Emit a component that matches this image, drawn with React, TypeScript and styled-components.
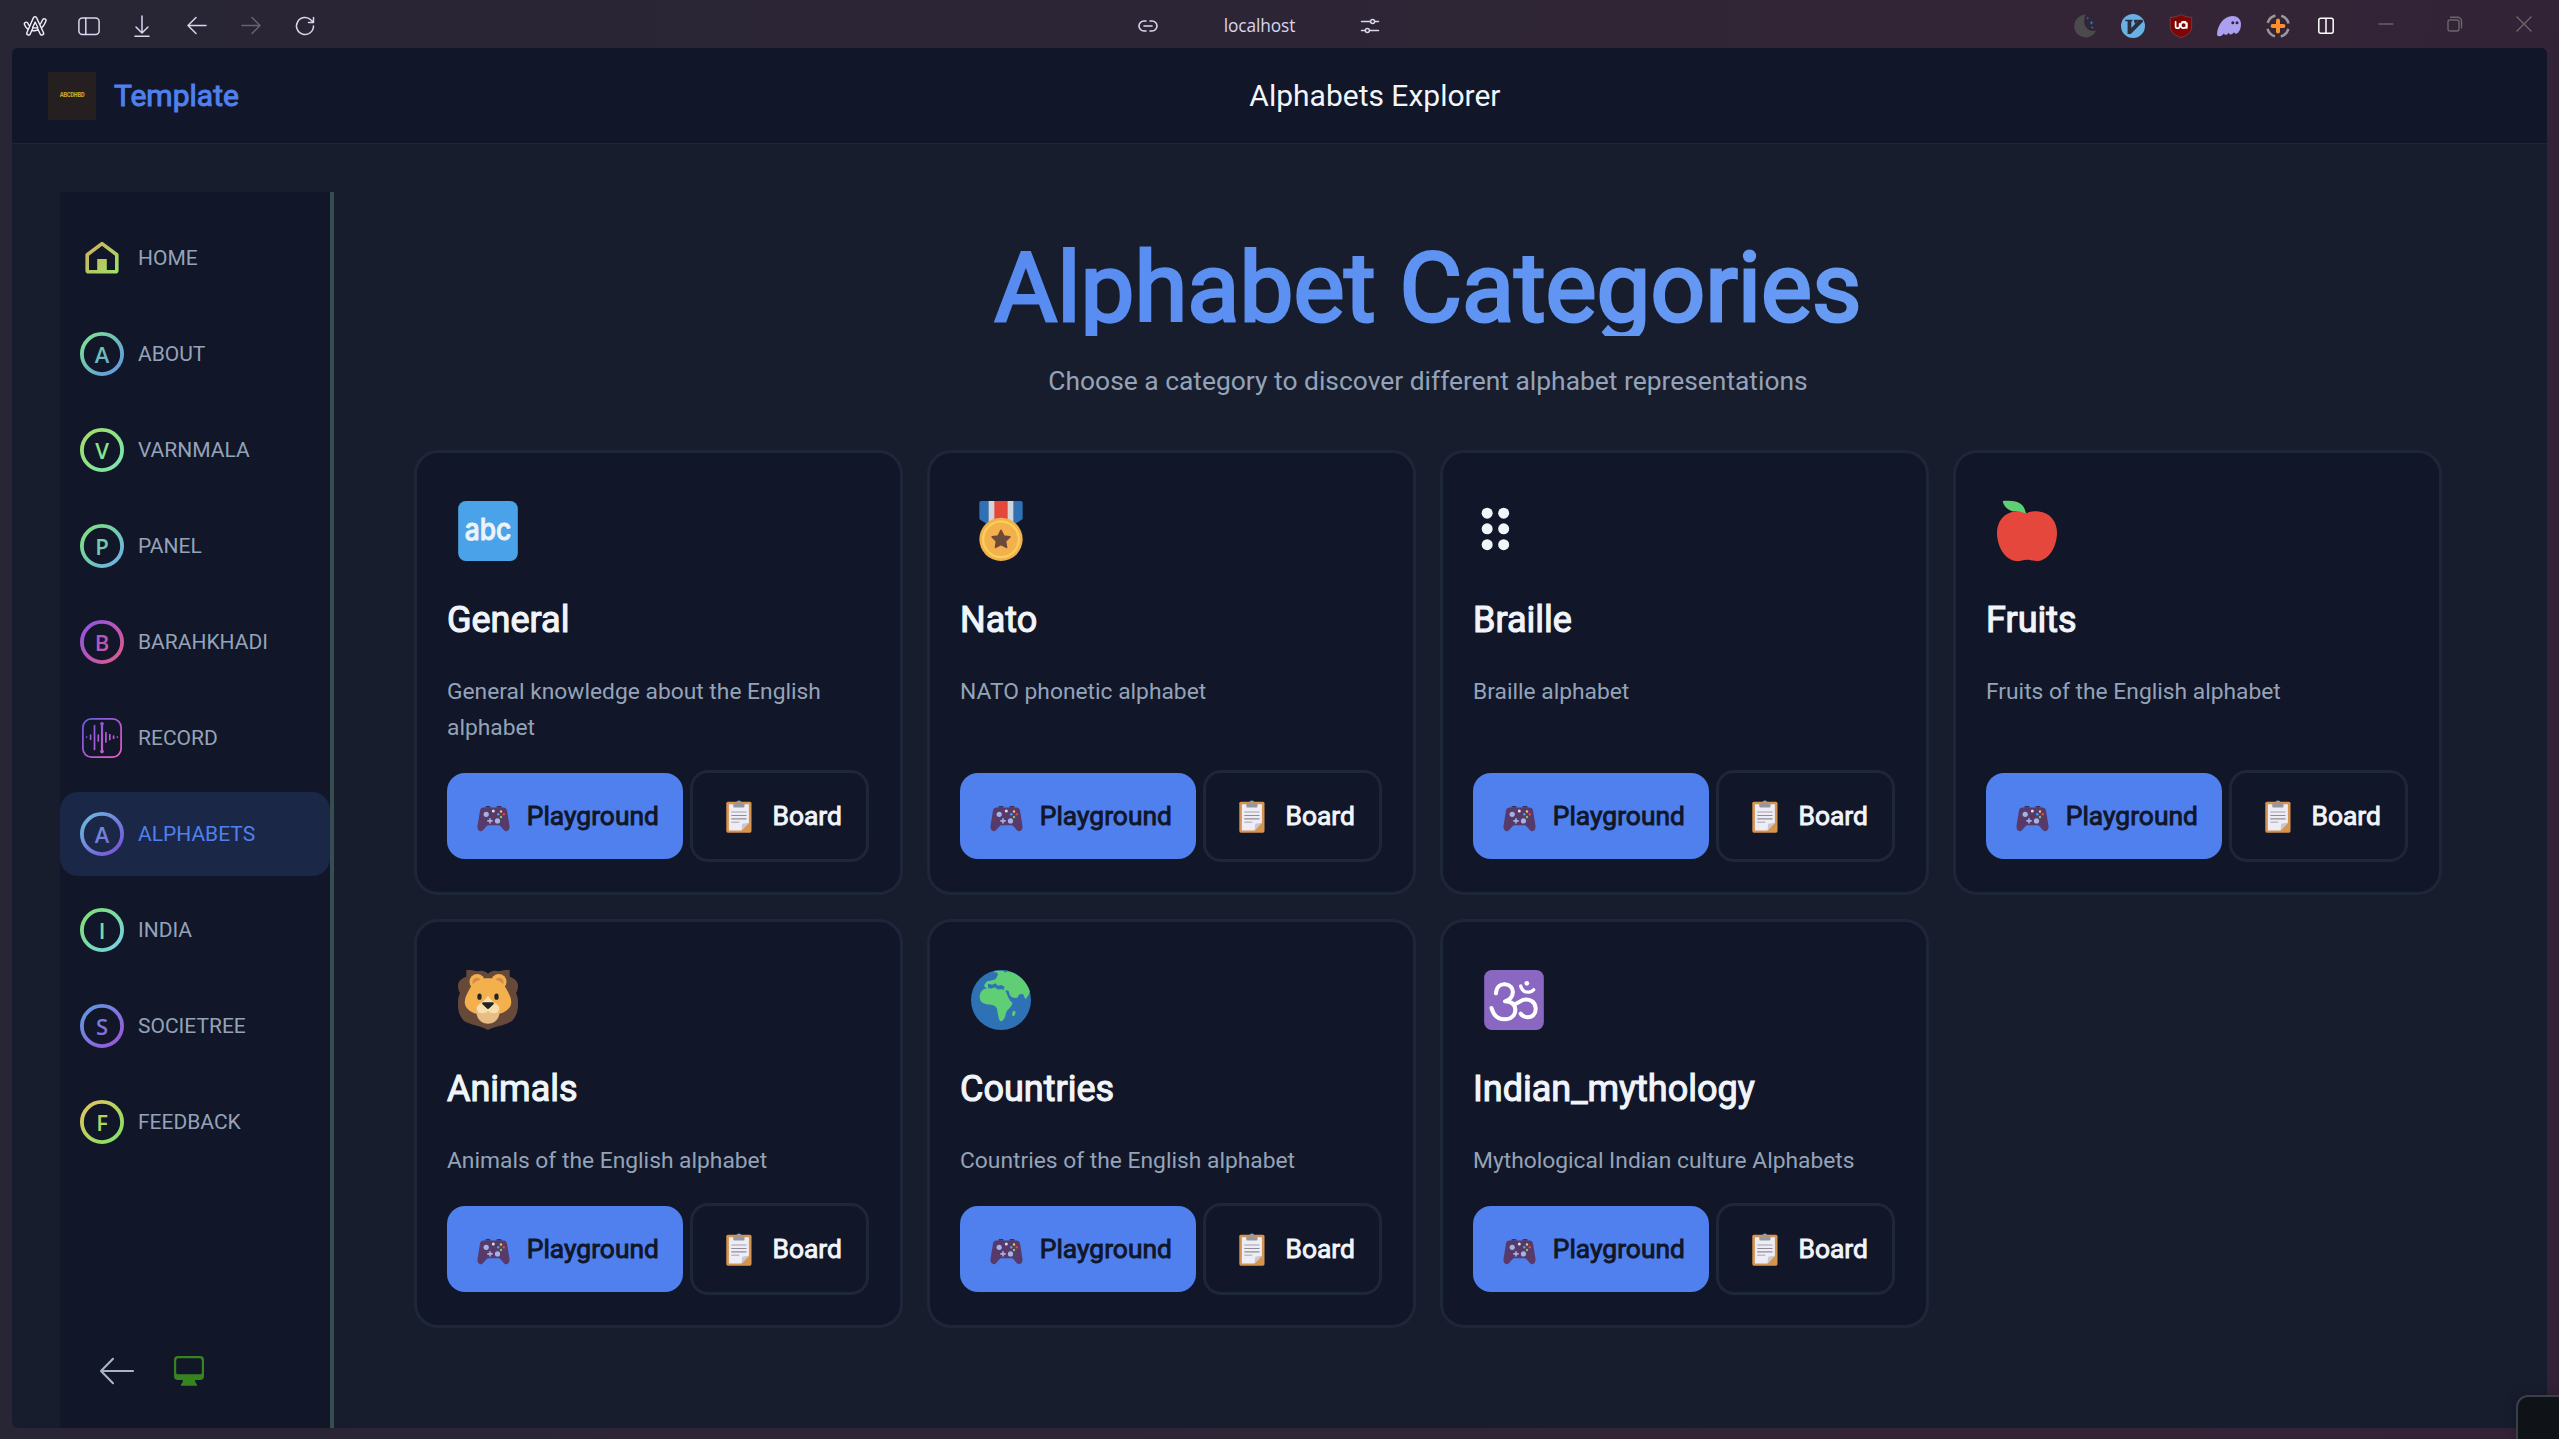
import React from "react";
import styled, { createGlobalStyle, css } from "styled-components";

const font = `Roboto, "Noto Sans", "Liberation Sans", sans-serif`;

const color = {
  page: "#181d2e",
  surface: "#111628",
  line: "#1e2739",
  text: "#f1f5f9",
  muted: "#94a3b8",
  primary: "#4f80ee",
  chrome: "#d9d6ee",
};

const GlobalStyle = createGlobalStyle`
  * { box-sizing: border-box; }
  html, body { margin: 0; padding: 0; height: 100%; overflow: hidden; }
  body { font-family: ${font}; color: ${color.text}; }
  h1, h2, p { margin: 0; font-weight: 400; }
  svg { display: block; flex: none; overflow: visible; }
  button { font: inherit; margin: 0; cursor: pointer; }
`;

/* ---------- window frame ---------- */

const Window = styled.div`
  position: relative;
  display: flex;
  flex-direction: column;
  width: 2559px;
  height: 1439px;
  padding: 0 12px 11px;
  overflow: hidden;
  background: linear-gradient(97deg, #282535 0%, #2d2535 48%, #342536 78%, #332236 100%);
`;

const TitleBar = styled.div`
  display: flex;
  align-items: center;
  flex: none;
  height: 48px;
  padding-top: 3px;
`;

const ToolGroup = styled.div<{ $left?: number; $gap?: number }>`
  display: flex;
  align-items: center;
  gap: ${(p) => p.$gap ?? 0}px;
  margin-left: ${(p) => p.$left ?? 0}px;
`;

const WindowControls = styled(ToolGroup)`
  padding-bottom: 4px;
`;

const Address = styled.div`
  width: 203px;
  text-align: center;
  font: 400 17.3px/24px "Open Sans", "Noto Sans", sans-serif;
  letter-spacing: -0.1px;
  color: ${color.chrome};
`;

const Page = styled.div`
  display: flex;
  flex-direction: column;
  flex: 1;
  min-height: 0;
  overflow: hidden;
  border-radius: 6px;
  background: ${color.page};
`;

const CornerWidget = styled.div`
  position: absolute;
  right: -12px;
  bottom: -12px;
  width: 55px;
  height: 56px;
  border: 2px solid #3c3f47;
  border-radius: 12px;
  background: #0f1317;
  box-shadow: 0 0 12px rgba(0, 0, 0, 0.25);
`;

/* ---------- header ---------- */

const Header = styled.header`
  display: flex;
  align-items: center;
  flex: none;
  height: 96px;
  padding: 0 36px;
  border-bottom: 1px solid ${color.line};
  background: ${color.surface};
`;

const Brand = styled.div`
  display: flex;
  align-items: center;
  gap: 18px;
`;

const Logo = styled.div`
  display: flex;
  align-items: center;
  justify-content: center;
  width: 48px;
  height: 48px;
  background: #25201f;
  color: #c9a62e;
  font: 700 6.5px/8px "Liberation Mono", monospace;
  letter-spacing: -0.4px;
`;

const BrandName = styled.span`
  font-size: 30px;
  line-height: 45px;
  color: ${color.primary};
  -webkit-text-stroke: 1px ${color.primary};
`;

const PageTitle = styled.span`
  flex: 1;
  font-size: 30px;
  line-height: 45px;
  text-align: center;
`;

const Body = styled.div`
  display: flex;
  flex: 1;
  min-height: 0;
  padding: 48px 105px 0 48px;
`;

/* ---------- sidebar ---------- */

const Sidebar = styled.nav`
  display: flex;
  flex-direction: column;
  flex: none;
  width: 274px;
  padding-top: 24px;
  border-right: 4px solid #374e50;
  background: ${color.surface};
`;

const NavList = styled.div`
  display: flex;
  flex-direction: column;
  gap: 12px;
`;

const NavItem = styled.a<{ $active?: boolean }>`
  display: flex;
  align-items: center;
  gap: 14px;
  height: 84px;
  padding-left: 20px;
  border-radius: 18px;
  font-size: 21px;
  line-height: 32px;
  color: ${(p) => (p.$active ? color.primary : color.muted)};
  background: ${(p) => (p.$active ? "#1b2746" : "transparent")};
`;

const SidebarTools = styled.div`
  display: flex;
  align-items: center;
  gap: 38px;
  margin-top: auto;
  padding: 0 0 42px 39px;
`;

/* ---------- content ---------- */

const Main = styled.main`
  flex: 1;
  min-width: 0;
  padding: 48px 0 0 80px;
`;

const Heading = styled.h1`
  font-size: 96px;
  line-height: 96px;
  text-align: center;
  background: linear-gradient(100deg, #4c80ef 0%, #72a6f5 100%);
  -webkit-background-clip: text;
  background-clip: text;
  color: transparent;
  -webkit-text-stroke: 3px transparent;
`;

const Lead = styled.p`
  margin: 24px 0 48px;
  font-size: 26.4px;
  line-height: 42px;
  text-align: center;
  color: ${color.muted};
`;

const Grid = styled.div`
  display: grid;
  grid-template-columns: repeat(4, 1fr);
  gap: 24px;
`;

const Card = styled.article`
  display: flex;
  flex-direction: column;
  padding: 30px;
  border: 3px solid ${color.line};
  border-radius: 24px;
  background: ${color.surface};
`;

const CardIcon = styled.div`
  height: 109.5px;
  padding: 18px 0 0 11px;
`;

const CardTitle = styled.h2`
  font-size: 36px;
  line-height: 54px;
  -webkit-text-stroke: 1.1px ${color.text};
`;

const CardText = styled.p`
  margin: 27px 0 24px;
  font-size: 22.8px;
  line-height: 36.48px;
  color: ${color.muted};
`;

const Actions = styled.div`
  display: flex;
  align-items: center;
  gap: 6.8px;
  margin-top: auto;
`;

const Button = styled.button<{ $primary?: boolean }>`
  display: flex;
  align-items: center;
  padding: 0 24px;
  border-radius: 18px;
  font-size: 26.4px;
  line-height: 40px;
  white-space: nowrap;
  ${(p) =>
    p.$primary
      ? css`
          height: 86px;
          border: 0;
          background: ${color.primary};
          color: ${color.surface};
          -webkit-text-stroke: 0.9px ${color.surface};
        `
      : css`
          height: 92px;
          border: 3px solid ${color.line};
          background: ${color.surface};
          color: ${color.text};
          -webkit-text-stroke: 0.9px ${color.text};
        `}
`;

const ButtonIcon = styled.span<{ $inset: number; $drop?: number }>`
  width: 55.8px;
  padding-left: ${(p) => p.$inset}px;
  padding-top: ${(p) => p.$drop ?? 0}px;
`;

/* ---------- title bar icons ---------- */

const line = {
  fill: "none",
  stroke: color.chrome,
  strokeWidth: 1.5,
  strokeLinecap: "round" as const,
  strokeLinejoin: "round" as const,
};

const ArcIcon = () => (
  <svg width="26" height="26" viewBox="0 0 26 26" fill="none" strokeLinecap="round" strokeLinejoin="round">
    <path d="M3.200 11c2.600 6.400 13.500 8 18-3.400" stroke="#f0eff8" strokeWidth="5" />
    <path d="M3.200 11c2.600 6.400 13.500 8 18-3.400" stroke="#2a2636" strokeWidth="2.200" />
    <path d="M5.600 20.200 12 5.600l6.800 14.600" stroke="#f0eff8" strokeWidth="5" />
    <path d="M5.600 20.200 12 5.600l6.800 14.600" stroke="#2a2636" strokeWidth="2.200" />
    <path d="M9.600 14.600c1.800.6 3.500.5 5.200-.1L12.200 9.200z" fill="#2a2636" stroke="#f0eff8" strokeWidth="1.300" />
  </svg>
);

const PanelIcon = () => (
  <svg width="22" height="20" viewBox="0 0 22 20" {...line}>
    <rect x="0.9" y="1.900" width="20.200" height="16.600" rx="3.500" />
    <path d="M7.800 1.900v16.600" />
  </svg>
);
const DownloadIcon = () => (
  <svg width="16" height="22" viewBox="0 0 16 22" {...line}>
    <path d="M8 1v17M2 12 8 18l6-6M1 21.200h14" />
  </svg>
);
const BackIcon = ({ dim }: { dim?: boolean }) => (
  <svg width="20" height="20" viewBox="0 0 20 20" {...line} opacity={dim ? 0.35 : 1}>
    <path d={dim ? "M1 9.500h18M11 1.500l8 8-8 8" : "M19 9.500H1M9 1.500l-8 8 8 8"} />
  </svg>
);
const ReloadIcon = () => (
  <svg width="20" height="20" viewBox="0 0 20 20" {...line}>
    <path d="M18.500 10a8.500 8.500 0 1 1-2.500-6l2 2M18.500 1.500V6.500h-5" />
  </svg>
);
const LinkIcon = () => (
  <svg width="20" height="14" viewBox="0 0 20 14" {...line} strokeWidth={1.6}>
    <path d="M8 2H6a5 5 0 0 0 0 10h2M12 2h2a5 5 0 0 1 0 10h-2M6 7h8" />
  </svg>
);
const TuneIcon = () => (
  <svg width="18" height="16" viewBox="0 0 18 16" {...line} strokeWidth={1.5}>
    <path d="M.5 3.500h8.800M14 3.500h3.500M.5 12.500H4M9 12.500h8.500" />
    <circle cx="11.600" cy="3.500" r="2" />
    <circle cx="6.400" cy="12.500" r="2" />
  </svg>
);

const MoonIcon = () => (
  <svg width="24" height="24" viewBox="0 0 24 24">
    <path d="M12.500.5A11.500 11.500 0 1 0 23.200 16.500C15 19.500 8 10.500 12.500.5z" fill="#4b4b4d" />
    <path
      d="M18.500 6.500l.6 1.700 1.700.6-1.700.6-.6 1.700-.6-1.700-1.700-.6 1.700-.6zM14.700 2.800l.4 1 1 .4-1 .4-.4 1-.4-1-1-.4 1-.4zM19.200 12.200l.4.900 1 .4-1 .4-.4.900-.4-.9-1-.4 1-.4z"
      fill="#1180d8"
    />
  </svg>
);
const VimIcon = () => (
  <svg width="24" height="24" viewBox="0 0 24 24">
    <circle cx="12" cy="12" r="12" fill="#68b1e2" />
    <path d="M4.300 5.800h7.400v1.400h-1.400v6.800L16.400 7.600V5.800h5l.8 1.700L9.800 20H6.600V7.200H4.300z" fill="#2c2c3c" />
    <path d="M11.700 5.800h4.700v1.800l-2.600 3V8.200h-2z" fill="#2c2c3c" />
    <path d="M12.300 5.200v5.800" stroke="#68b1e2" strokeWidth="1.600" />
  </svg>
);
const ShieldIcon = () => (
  <svg width="24" height="24" viewBox="0 0 24 24">
    <path
      d="M12 .5C9 2.300 5.500 3.200 1.300 3.300V13c0 5 4.500 8.500 10.700 10.600C18.200 21.500 22.700 18 22.700 13V3.300C18.500 3.200 15 2.300 12 .5z"
      fill="#7f0406"
      stroke="#9d5a5e"
      strokeWidth=".5"
    />
    <path
      d="M6.600 7.800v4.700c0 1.200.8 1.700 2 1.700s2-.5 2-1.700V9.800M16.400 7.800h-3.100M17.800 9v4.900"
      fill="none"
      stroke="#fff"
      strokeWidth="1.700"
      strokeLinecap="round"
    />
    <circle cx="14.600" cy="11.200" r="2.900" fill="none" stroke="#fff" strokeWidth="1.700" />
  </svg>
);
const GhostIcon = () => (
  <svg width="26" height="24" viewBox="0 0 26 24">
    <path
      d="M1 20.500C1 12 7.500 2 16.500 2c5 0 8.500 3.300 8.500 8 0 5.200-2.500 9.800-5.200 9.800-1.300 0-1.500-1-1.700-1.700-1 1.700-2.300 2.500-3.600 2.300-1.300-.2-1.600-1.300-1.500-2-1.300 1.700-2.600 2.600-3.900 2.300-1-.3-1.100-1-1-1.700C6.500 21.600 5 22.300 3.200 22.200 1.800 22.200 1 21.600 1 20.500z"
      fill="#ab9ff2"
    />
    <circle cx="16.800" cy="8.700" r="1.500" fill="#2f2537" />
    <circle cx="21" cy="8.700" r="1.500" fill="#2f2537" />
  </svg>
);
const TargetIcon = () => (
  <svg width="24" height="24" viewBox="0 0 24 24" fill="none">
    <circle
      cx="12"
      cy="12"
      r="10.800"
      stroke="#9a9a9c"
      strokeWidth="2.500"
      strokeDasharray="11 5.960"
      strokeDashoffset="-3"
    />
    <path d="M12 6.600v10.800M6.600 12h10.800" stroke="#ff8f2b" strokeWidth="4" strokeLinecap="round" />
  </svg>
);
const SplitIcon = () => (
  <svg width="16" height="17" viewBox="0 0 16 17" fill="none" stroke="#fff" strokeWidth="1.500">
    <rect x=".8" y="1.200" width="14.400" height="15" rx="2" />
    <path d="M8 1.200v15" />
  </svg>
);
const WindowIcon = ({ d }: { d: string }) => (
  <svg width="16" height="16" viewBox="0 0 16 16" fill="none" stroke="#6d6569" strokeWidth="1.400">
    <path d={d} />
  </svg>
);

/* ---------- sidebar icons ---------- */

type Stops = [string, string];

const Gradient = ({ id, stops }: { id: string; stops: Stops }) => (
  <linearGradient id={id} x1="4" y1="4" x2="40" y2="40" gradientUnits="userSpaceOnUse">
    <stop offset="0" stopColor={stops[0]} />
    <stop offset="1" stopColor={stops[1]} />
  </linearGradient>
);

const LetterIcon = ({ id, letter, stops }: { id: string; letter: string; stops: Stops }) => (
  <svg width="44" height="44" viewBox="0 0 44 44">
    <defs>
      <Gradient id={id} stops={stops} />
    </defs>
    <circle cx="22" cy="22" r="20.100" fill="none" stroke={`url(#${id})`} strokeWidth="3.800" />
    <text
      x="22"
      y="30.500"
      textAnchor="middle"
      fill={`url(#${id})`}
      fontFamily="'Open Sans', 'Noto Sans', sans-serif"
      fontWeight="600"
      fontSize="22"
    >
      {letter}
    </text>
  </svg>
);

const HomeIcon = () => (
  <svg width="44" height="44" viewBox="0 0 44 44">
    <defs>
      <Gradient id="home" stops={["#d8a85c", "#98e666"]} />
    </defs>
    <path
      d="M7.200 19.200 22 8l14.800 11.200v15.400q0 1.600-1.600 1.600H8.800q-1.600 0-1.600-1.600z"
      transform="translate(0 -0.400)"
      fill="none"
      stroke="url(#home)"
      strokeWidth="3.600"
      strokeLinejoin="round"
    />
    <path d="M17.200 23h9.600v13h-9.600z" fill="url(#home)" />
  </svg>
);

const RecordIcon = () => (
  <svg width="44" height="44" viewBox="0 0 44 44" fill="none" stroke="url(#rec)" strokeLinecap="round">
    <defs>
      <Gradient id="rec" stops={["#6c5ae8", "#ec5cc4"]} />
    </defs>
    <rect x="2.900" y="2.900" width="38.200" height="38.200" rx="8.500" strokeWidth="1.700" />
    <path
      d="M6.600 21v.01M10.600 19v4.200M14.500 9.500v24M18.300 19v6M25.900 16.500v9.500M29.800 18.500v5M33.600 20.200v2M37.400 21v.01"
      strokeWidth="1.700"
    />
    <path d="M22.010 8v28" strokeWidth="2.200" />
    <circle cx="22" cy="7.800" r="1.800" fill="url(#rec)" stroke="none" />
    <circle cx="22" cy="35.600" r="1.800" fill="url(#rec)" stroke="none" />
  </svg>
);

const CollapseIcon = () => (
  <svg width="37" height="30" viewBox="0 0 37 30" fill="none" stroke="#a9b4c6" strokeWidth="2.100" strokeLinecap="round" strokeLinejoin="round">
    <path d="M34 15H2.500M14 2.800 2 15l12 12.200" />
  </svg>
);

const DisplayIcon = () => (
  <svg width="30" height="30" viewBox="0 0 30 30" fill="#37831f">
    <path
      fillRule="evenodd"
      d="M4 0h22a4 4 0 0 1 4 4v16a4 4 0 0 1-4 4h-5c.2 1.900.8 3.100 1.800 4.200.7.800.4 1.500-.6 1.500H7.800c-1 0-1.300-.7-.6-1.500 1-1.100 1.600-2.300 1.800-4.200H4a4 4 0 0 1-4-4V4a4 4 0 0 1 4-4zm.5 2.200A2.300 2.300 0 0 0 2.200 4.500v12.300c0 .9.600 1.500 1.500 1.500h22.600c.9 0 1.500-.6 1.500-1.500V4.500a2.300 2.300 0 0 0-2.300-2.300z"
    />
  </svg>
);

/* ---------- emoji artwork ---------- */

const Emoji = ({ children }: { children: React.ReactNode }) => (
  <svg width="60" height="60" viewBox="0 0 36 36">
    {children}
  </svg>
);

const AbcEmoji = () => (
  <Emoji>
    <rect x=".1" width="35.800" height="36" rx="4.600" fill="#4aa2e8" />
    <text
      x="4"
      y="23.600"
      fill="#eef3f8"
      fontFamily="Inter, sans-serif"
      fontWeight="500"
      fontSize="18"
      textLength="28"
      lengthAdjust="spacingAndGlyphs"
      stroke="#eef3f8"
      strokeWidth=".55"
      strokeLinejoin="round"
    >
      abc
    </text>
  </Emoji>
);

const MedalEmoji = () => (
  <Emoji>
    <path d="M6 .0h24a1 1 0 0 1 1 1v9.400q0 .5-.5.800L18 19 5.500 11.200q-.5-.3-.5-.8V1a1 1 0 0 1 1-1z" fill="#2f71b5" />
    <path d="M10.600 0h14.800v14H10.600z" fill="#d3d5d8" />
    <path d="M14 0h8v14h-8z" fill="#e5473c" />
    <circle cx="18" cy="23" r="13" fill="#f3b04c" />
    <circle cx="18" cy="23" r="10.700" fill="none" stroke="#f8d35a" strokeWidth="1.300" />
    <path
      d="M18 17.600l1.700 3.400 3.600.5-2.600 2.600.6 3.700-3.300-1.700-3.300 1.700.6-3.700-2.600-2.600 3.600-.5z"
      fill="#6b4a3a"
      stroke="#6b4a3a"
      strokeWidth="1"
      strokeLinejoin="round"
    />
  </Emoji>
);

const BrailleIcon = () => (
  <Emoji>
    {[7.3, 16.7, 26.2].map((y) => (
      <React.Fragment key={y}>
        <circle cx="1.900" cy={y} r="3.300" fill={color.text} />
        <circle cx="11.800" cy={y} r="3.300" fill={color.text} />
      </React.Fragment>
    ))}
  </Emoji>
);

const AppleEmoji = () => (
  <Emoji>
    <path
      d="M18 7.300C20 6.300 22.500 6 25 6.300 32 7 36 12.500 36 19c0 8.500-5 16.500-11.500 17-2.500.1-4.300-.8-6.500-.8s-4 .9-6.500.8C5 35.500 0 27.500 0 19 0 12.500 4 7 11 6.300c2.500-.3 5 0 7 1z"
      fill="#e5473c"
    />
    <path d="M3.400 0c5.600-.5 9.600.2 11.800 2.600 1.300 1.500 1.900 3.200 2.100 5C14 6.200 12 5.900 9.600 6.300 6 5.200 4 3 3.400 0z" fill="#5fce75" />
  </Emoji>
);

const LionEmoji = () => (
  <Emoji>
    <path
      d="M5 0c3 0 4.500.3 6.500.8C14 .2 16 .3 18 2.200 20 .3 22 .2 24.500.8 26.500.3 28 0 31 0v4c3.500 1.200 5 3 5 5.500 0 1.500-.3 3-1.200 4.500.9 1.500 1.200 3 1.200 6 0 4-.5 7-3.500 10.500C29 33 22.500 33.500 18 36 13.500 33.500 7 33 3.500 30.500.5 27 0 24 0 20c0-3 .3-4.500 1.200-6C.3 12.500 0 11 0 9.500 0 7 1.500 5.200 5 4z"
      fill="#67493a"
    />
    <circle cx="11.500" cy="7" r="4.600" fill="#f3b04c" />
    <circle cx="24.500" cy="7" r="4.600" fill="#f3b04c" />
    <circle cx="11.300" cy="7.300" r="2.600" fill="#d48a4a" />
    <circle cx="24.700" cy="7.300" r="2.600" fill="#d48a4a" />
    <path
      d="M18 5c4 0 8.500 1.500 10.800 6 1.800 3.500 3.700 6.200 3 9.500-.8 3.500-5 5.500-8 6H12.200c-3-.5-7.200-2.500-8-6-.7-3.300 1.200-6 3-9.500C9.500 6.500 14 5 18 5z"
      fill="#f3b04c"
    />
    <path d="M10.500 22h15l-.8 5c-.8 3.300-3.500 5.200-6.700 5.200s-5.900-1.900-6.700-5.200z" fill="#e6bd84" />
    <path d="M18 15.500c1.500 2 2.200 3.200 4.500 4.500 3.500 2 2.500 6-1 6-1.500 0-2.700-.5-3.500-1.500-.8 1-2 1.500-3.500 1.500-3.500 0-4.500-4-1-6 2.300-1.300 3-2.500 4.500-4.500z" fill="#fadfae" />
    <path d="M15.300 19.300h5.400c.8 0 1.100.6.600 1.300L18.800 23c-.5.500-1.100.5-1.600 0l-2.500-2.400c-.5-.7-.2-1.300.6-1.300z" fill="#222326" />
    <ellipse cx="12.900" cy="16" rx="1.300" ry="1.900" fill="#222326" />
    <ellipse cx="23.100" cy="16" rx="1.300" ry="1.900" fill="#222326" />
  </Emoji>
);

const GlobeEmoji = () => (
  <Emoji>
    <circle cx="18" cy="18" r="18" fill="#2f71b5" />
    <path
      d="M14 .6C18 .2 21 .3 24 1.200c5.500 2 9.500 6.300 11.300 11.500-.2 2-1.600 3.300-2.500 4.800-.8-1-.9-2.400-1.900-3.100-1.600-.2-2.500.5-2.800 1.900-1.300.9-3.800.4-4.700-1.200-.8-1.600-.3-2.900-2-3-1.200.8-2.500.6-3.600-.3-1.500-.3-2.500.5-3.500 0-1.500-.6-3-1.300-4.600-.5L7.900 9.800c0-1.400 1-2.200 1.900-3l3.700-.8.8-3.200z"
      fill="#5fce75"
    />
    <path d="M12.300 3.500 15 1l1.300 1.500-1.500 3-2.800.6zM18.500.3h3.600l-1.100 1.200z" fill="#2f71b5" />
    <path d="M10.200 8.200l2.600.6 1.800-.9 1.500 1.600 2-.5 2 1-.4 1.800-2.300-.6-1.500.4-1.600-1.300-2.300 1-1.900-.9z" fill="#2f71b5" />
    <path
      d="M8.300 11.300c2.500-.4 4.500-.3 6.500.4 2.500.8 4.900-.2 6.100 1.400.9 1.500 1.200 3.500 2.600 5.300.9.900 1.600 1 1.200 2.300-1 2-2.900 3-3.700 4.900-.2 2-.8 3.400-2 4.700-.6.700-1.600.5-2-.5-.8-2-1-4.500-1.500-6.700-.5-1.500-1.800-2-3.500-2.300-3.500-.3-6.500-.6-6.800-4.300-.1-2.500 1-4.300 3.100-5.200z"
      fill="#5fce75"
    />
    <path d="M25.600 24.500c1-.3 1.300.7 1 1.600-.3 1-.9 1.900-1.500 1.600-.7-.6-.6-2.500.5-3.200z" fill="#5fce75" />
  </Emoji>
);

const OmEmoji = () => (
  <Emoji>
    <rect x=".1" width="35.800" height="36" rx="4.600" fill="#8a68c2" />
    <g fill="none" stroke="#fff" strokeLinecap="round" strokeLinejoin="round">
      <path
        d="M7.200 14C7.400 10 9.800 8.300 12.500 8.500c3.200.2 5 2.400 4.800 5-.2 3-2 4.500-4.700 5.300 4 .1 6 2 6.200 5 .1 3.400-2.600 5.800-6.500 5.800-4.300 0-6.800-3-7.800-6.800"
        strokeWidth="2.400"
      />
      <path d="M17.500 20.500c2.500.2 3.600-1.900 6-2.600 3.800-.8 7.200 1.100 7.500 5 .2 3.500-2 5.400-4.700 5.400-1.800 0-3.400-.7-4.300-2.100" strokeWidth="2.400" />
      <path d="M22 9.600c.7 2.500 2.500 3.900 4.900 3.700 1.300-.1 2.300-.6 2.900-1.400" strokeWidth="2" />
    </g>
    <circle cx="25.700" cy="8" r="1.400" fill="#fff" />
  </Emoji>
);

const GamepadEmoji = () => (
  <svg width="33" height="26" viewBox="0 0 33 26">
    <path d="M8 1.600 9 .3h4l.8 1.300M19.200 1.600 20 .3h4l1 1.300" fill="#23182f" />
    <path
      d="M6.500 1.400h20c2 0 3 1.100 3.500 3L32.500 20c.4 3.200-1.500 5.700-3.800 5.200-1.600-.3-2.400-1.900-5.200-5-.7-.8-1.300-1-2.200-1h-9.600c-.9 0-1.500.2-2.200 1-2.800 3.100-3.600 4.700-5.200 5C2 25.700.1 23.200.5 20L3 4.400c.5-1.900 1.500-3 3.500-3z"
      fill="#573a6a"
    />
    <circle cx="9.200" cy="8.300" r="2.600" fill="#a4b3e6" />
    <circle cx="20.500" cy="14.900" r="2.600" fill="#a4b3e6" />
    <path d="M13 12.200v5.400M10.300 14.900h5.400" stroke="#a4b3e6" strokeWidth="1.600" />
    <circle cx="16.300" cy="4.900" r="1.500" fill="#dcdde6" />
    <circle cx="24" cy="5.500" r="1.200" fill="#f6c945" />
    <circle cx="24" cy="11" r="1.200" fill="#7cc95a" />
    <circle cx="21.300" cy="8.300" r="1.200" fill="#43a5ea" />
    <circle cx="26.800" cy="8.300" r="1.200" fill="#e5473c" />
  </svg>
);

const ClipboardEmoji = () => (
  <svg width="26" height="33" viewBox="0 0 26 33">
    <rect x=".3" y="1.700" width="25.200" height="31" rx="1.600" fill="#d6954f" />
    <path d="M2.900 4.200h20v18.600l-7.500 7.600H2.900z" fill="#eeecf4" />
    <path d="M22.900 22.800 15.500 30.400l.8-6.700z" fill="#c8c5d6" />
    <path d="M5.300 12h15.200M5.300 22.300h8" stroke="#bdbbc6" strokeWidth="1.400" />
    <path d="M5.300 15.500h15.200M5.300 18.800h15.200" stroke="#8e8d97" strokeWidth="1.200" />
    <path d="M7.300 3.400h3.200A2.500 2.500 0 0 1 12.900.5a2.500 2.500 0 0 1 2.400 2.900h3.200v3q0 1-1 1H8.300q-1 0-1-1z" fill="#98989c" />
    <circle cx="12.900" cy="2.900" r=".8" fill="#d6954f" />
  </svg>
);

/* ---------- data ---------- */

const navItems: { label: string; icon: React.ReactNode; active?: boolean }[] = [
  { label: "HOME", icon: <HomeIcon /> },
  { label: "ABOUT", icon: <LetterIcon id="about" letter="A" stops={["#7ce294", "#5f98e4"]} /> },
  { label: "VARNMALA", icon: <LetterIcon id="varnmala" letter="V" stops={["#a0e066", "#78e6b0"]} /> },
  { label: "PANEL", icon: <LetterIcon id="panel" letter="P" stops={["#7ee27c", "#6ab2e4"]} /> },
  { label: "BARAHKHADI", icon: <LetterIcon id="barahkhadi" letter="B" stops={["#9254e4", "#dc5a8c"]} /> },
  { label: "RECORD", icon: <RecordIcon /> },
  { label: "ALPHABETS", icon: <LetterIcon id="alphabets" letter="A" stops={["#6cb8e0", "#7850d8"]} />, active: true },
  { label: "INDIA", icon: <LetterIcon id="india" letter="I" stops={["#80e070", "#74d4e4"]} /> },
  { label: "SOCIETREE", icon: <LetterIcon id="societree" letter="S" stops={["#5f9ae4", "#9c54d8"]} /> },
  { label: "FEEDBACK", icon: <LetterIcon id="feedback" letter="F" stops={["#e4c45e", "#82e466"]} /> },
];

const categories = [
  { title: "General", text: "General knowledge about the English alphabet", icon: <AbcEmoji /> },
  { title: "Nato", text: "NATO phonetic alphabet", icon: <MedalEmoji /> },
  { title: "Braille", text: "Braille alphabet", icon: <BrailleIcon /> },
  { title: "Fruits", text: "Fruits of the English alphabet", icon: <AppleEmoji /> },
  { title: "Animals", text: "Animals of the English alphabet", icon: <LionEmoji /> },
  { title: "Countries", text: "Countries of the English alphabet", icon: <GlobeEmoji /> },
  { title: "Indian_mythology", text: "Mythological Indian culture Alphabets", icon: <OmEmoji /> },
];

export default function App() {
  return (
    <>
      <GlobalStyle />
      <Window>
        <TitleBar>
          <ToolGroup $left={11}>
            <ArcIcon />
          </ToolGroup>
          <ToolGroup $left={29}>
            <PanelIcon />
          </ToolGroup>
          <ToolGroup $left={34}>
            <DownloadIcon />
          </ToolGroup>
          <ToolGroup $left={37} $gap={34}>
            <BackIcon />
            <BackIcon dim />
            <ReloadIcon />
          </ToolGroup>
          <ToolGroup $left={823}>
            <LinkIcon />
            <Address>localhost</Address>
            <TuneIcon />
          </ToolGroup>
          <ToolGroup $left={694} $gap={23.8}>
            <MoonIcon />
            <VimIcon />
            <ShieldIcon />
            <GhostIcon />
            <TargetIcon />
          </ToolGroup>
          <ToolGroup $left={28}>
            <SplitIcon />
          </ToolGroup>
          <WindowControls $left={44} $gap={53}>
            <WindowIcon d="M.5 8h15" />
            <WindowIcon d="M3 1.200h7.500a4 4 0 0 1 4 4v7M3 4h7a2 2 0 0 1 2 2v7a2 2 0 0 1-2 2H3a2 2 0 0 1-2-2V6a2 2 0 0 1 2-2z" />
            <WindowIcon d="M.5.500l15 15M15.500.500l-15 15" />
          </WindowControls>
        </TitleBar>

        <Page>
          <Header>
            <Brand>
              <Logo>ABCDHBD</Logo>
              <BrandName>Template</BrandName>
            </Brand>
            <PageTitle>Alphabets Explorer</PageTitle>
          </Header>
          <Body>
            <Sidebar>
              <NavList>
                {navItems.map((item) => (
                  <NavItem key={item.label} $active={item.active}>
                    {item.icon}
                    {item.label}
                  </NavItem>
                ))}
              </NavList>
              <SidebarTools>
                <CollapseIcon />
                <DisplayIcon />
              </SidebarTools>
            </Sidebar>
            <Main>
              <Heading>Alphabet Categories</Heading>
              <Lead>Choose a category to discover different alphabet representations</Lead>
              <Grid>
                {categories.map((c) => (
                  <Card key={c.title}>
                    <CardIcon>{c.icon}</CardIcon>
                    <CardTitle>{c.title}</CardTitle>
                    <CardText>{c.text}</CardText>
                    <Actions>
                      <Button $primary>
                        <ButtonIcon $inset={5.5} $drop={5}>
                          <GamepadEmoji />
                        </ButtonIcon>
                        Playground
                      </Button>
                      <Button>
                        <ButtonIcon $inset={9}>
                          <ClipboardEmoji />
                        </ButtonIcon>
                        Board
                      </Button>
                    </Actions>
                  </Card>
                ))}
              </Grid>
            </Main>
          </Body>
        </Page>
        <CornerWidget />
      </Window>
    </>
  );
}
